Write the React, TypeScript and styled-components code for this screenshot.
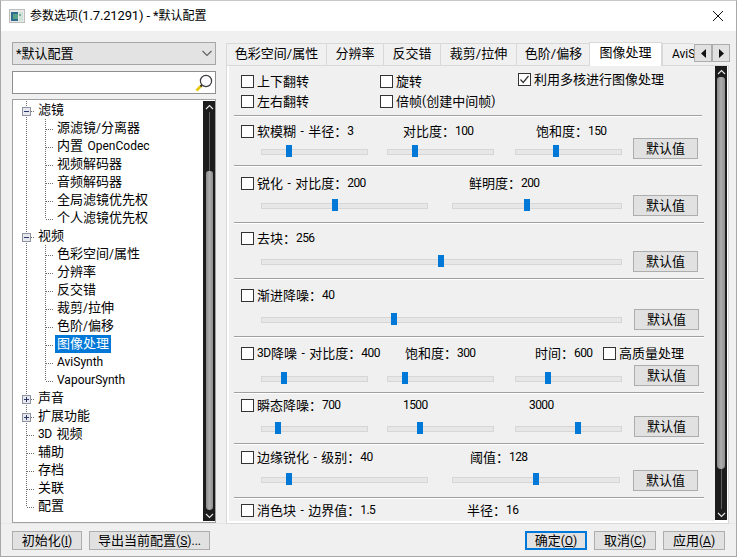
import React from "react";
import styled, { createGlobalStyle } from "styled-components";

const Global = createGlobalStyle`
  html, body { margin: 0; padding: 0; background: #f0f0f0; }
  * { box-sizing: border-box; }
  body { font-family: Roboto, "Noto Sans CJK SC", sans-serif; font-size: 13px; color: #000; }
`;

const Window = styled.div`
  width: 737px; height: 557px; display: flex; flex-direction: column;
  background: #f0f0f0; border: 1px solid #a8a8a8; border-top-color: #c8c8c8; overflow: hidden;
`;
const TitleBar = styled.header`
  height: 30px; background: #fff; display: flex; align-items: center; padding: 0 9px 1px 8px; flex: none;
`;
const TitleText = styled.span`
  margin-left: 5px; flex: 1; line-height: 16px; white-space: pre; font-size: 12px;
`;
const Main = styled.div`
  height: 492px; display: flex; flex: none;
`;
const Left = styled.div`
  width: 215px; padding: 11px 0 0 11px; display: flex; flex-direction: column; flex: none;
`;
const Combo = styled.div`
  height: 23px; background: #e3e3e3; border: 1px solid #a6a6a6; display: flex; align-items: center;
  justify-content: space-between; padding: 0 2px 0 3px; line-height: 16px;
`;
const Search = styled.div`
  height: 23px; margin-top: 6px; background: #fff; border: 1px solid #8f8f8f; display: flex;
  align-items: center; justify-content: flex-end; padding-right: 1px;
`;
const Tree = styled.div`
  margin-top: 5px; height: 424px; background: #fff; border: 1px solid #a0a0a0; display: flex;
  justify-content: space-between; padding: 1px 0 1px 0; flex: none;
`;
const TreeList = styled.div`
  display: flex; flex-direction: column; width: 189px;
`;
const TreeRow = styled.div`
  height: 18px; display: flex; align-items: stretch; flex: none; white-space: pre;
`;
const TreeLabel = styled.span<{ $selected?: boolean }>`
  padding: 0 2px; line-height: 17px; height: 18px; background: ${(p) => (p.$selected ? "#0078d7" : "transparent")};
  color: ${(p) => (p.$selected ? "#fff" : "#000")};
`;
const Bar = styled.div<{ $w: number }>`
  width: ${(p) => p.$w}px; background: #1c1c1c; display: flex; flex-direction: column; align-items: center; flex: none;
`;
const BarArrow = styled.div`
  height: 11px; display: flex; align-items: center; justify-content: center; flex: none;
`;
const BarLine = styled.div<{ $h: number }>`
  width: 1px; height: ${(p) => p.$h}px; background: #5f5f5f; flex: none;
`;
const BarThumb = styled.div<{ $w: number; $h: number }>`
  width: ${(p) => p.$w}px; height: ${(p) => p.$h}px; flex: none; border-radius: 4px 4px 5px 5px;
  background: linear-gradient(90deg, #8a8a8a, #adadad 50%, #8f8f8f);
`;
const Right = styled.div`
  position: relative; margin-left: 10px; width: 503px; padding-top: 11px; display: flex; flex-direction: column; flex: none;
`;
const TabStrip = styled.div`
  display: flex; align-items: flex-end; height: 24px; width: 468px; overflow: hidden; flex: none;
`;
const Tab = styled.div<{ $w: number; $active?: boolean }>`
  position: relative; z-index: ${(p) => (p.$active ? 1 : 0)}; width: ${(p) => p.$w}px; flex: none;
  height: ${(p) => (p.$active ? 24 : 22)}px; margin-bottom: ${(p) => (p.$active ? 0 : 1)}px;
  margin-left: ${(p) => (p.$active ? -1 : 0)}px;
  background: ${(p) => (p.$active ? "#fff" : "#f0f0f0")}; border: 1px solid #d9d9d9; border-width: 1px 0 0 1px;
  ${(p) => (p.$active ? "border-right-width: 1px;" : "")}
  text-align: center; line-height: ${(p) => (p.$active ? 20 : 19)}px; white-space: pre;
`;
const TabText = styled.span<{ $clip?: boolean }>`
  ${(p) => (p.$clip ? "display:block; text-align:left; padding-left: 9px;" : "")}
`;
const Spin = styled.div`
  position: absolute; left: 468px; top: 13px; display: flex;
`;
const SpinBtn = styled.div`
  width: 18px; height: 18px; background: #e1e1e1; border: 1px solid #adadad;
  display: flex; align-items: center; justify-content: center;
`;
const Page = styled.div`
  margin-top: -1px; height: 459px; background: #fff; border: 1px solid #d9d9d9; padding: 0 1px 3px 2px; display: flex; flex: none;
`;
const Content = styled.div`
  width: 486px; height: 455px; background: #f0f0f0; overflow: hidden; flex: none;
`;
const Divider = styled.div<{ $end: number }>`
  height: 2px; margin-left: 5px; width: ${(p) => p.$end}px; background: #a0a0a0; border-bottom: 1px solid #fff;
`;
const Section = styled.section<{ $h: number; $pt: number }>`
  height: ${(p) => p.$h}px; padding: ${(p) => p.$pt}px 0 0 12px;
`;
const OptionGrid = styled.div`
  display: grid; grid-template-columns: 139px 138px 200px; grid-auto-rows: 20px;
`;
const Header = styled.div`
  display: flex; height: 13px; align-items: center;
`;
const Cell = styled.div<{ $w?: number }>`
  ${(p) => (p.$w ? `width: ${p.$w}px; flex: none;` : "")}
  display: flex; align-items: center; white-space: pre; line-height: 13px; height: 13px;
`;
const OptionCell = styled(Cell)<{ $up?: number }>`
  margin-top: ${(p) => -(p.$up ?? 0)}px;
`;
const Box = styled.span`
  width: 13px; height: 13px; background: #fff; border: 1px solid #333; flex: none; margin-right: 3px;
  display: inline-flex; align-items: center; justify-content: center;
`;
const Controls = styled.div<{ $gap: number }>`
  display: flex; margin-top: ${(p) => p.$gap}px;
`;
const Sliders = styled.div<{ $top: number }>`
  width: 392px; padding: ${(p) => p.$top}px 0 0 20px; display: flex; align-items: flex-start; flex: none;
`;
const Slider = styled.div<{ $w: number; $ml: number }>`
  position: relative; width: ${(p) => p.$w}px; height: 12px; margin-left: ${(p) => p.$ml}px; flex: none;
  &::before {
    content: ""; display: block; margin-top: 4px; height: 4px; background: #e7e7e7; border: 1px solid #d6d6d6;
  }
`;
const Thumb = styled.div`
  position: absolute; top: 0; width: 6px; height: 12px; background: #0078d7;
`;
const Btn = styled.button<{ $w?: number; $default?: boolean; $ml?: number }>`
  font: inherit; color: #000; padding: 0; width: ${(p) => p.$w ?? 65}px; height: 21px; flex: none;
  margin-left: ${(p) => p.$ml ?? 0}px; background: #e1e1e1;
  border: ${(p) => (p.$default ? "2px solid #0078d7" : "1px solid #adadad")}; line-height: 16px; white-space: pre;
  text-align: center;
`;
const Footer = styled.footer`
  flex: 1; display: flex; padding: 7px 11px 0 11px; gap: 7px; border-top: 1px solid #e6e6e6;
`;
const FooterBtn = styled(Btn)`
  height: 19px; line-height: 15px;
`;
const Spacer = styled.div`
  flex: 1;
`;
const Latin = styled.span`
  font-size: 12px; word-spacing: 1.5px;
`;
const Digits = styled.span`
  font-size: 12px; letter-spacing: -0.6px;
`;
const TitleLatin = styled.span`
  font-size: 13px; letter-spacing: -0.15px;
`;

/* The reference's Latin and digits are smaller than its Han text, so runs of each get their own span. */
function mix(text: string): React.ReactNode {
  return text.split(/([0-9.]+|[\x20-\x2d\x2f\x3a-\x7e]+)/).filter(Boolean).map((run, i) => {
    if (/^[0-9.]+$/.test(run)) return <Digits key={i}>{run}</Digits>;
    if (/^[\x20-\x7e]+$/.test(run)) return <Latin key={i}>{run}</Latin>;
    return <React.Fragment key={i}>{run}</React.Fragment>;
  });
}

function Access({ before, letter, after = "" }: { before: string; letter: string; after?: string }) {
  return (
    <>
      {before}<Latin>(<u>{letter}</u>){after}</Latin>
    </>
  );
}

type Node = { t: string; lvl: 0 | 1; box?: "minus" | "plus"; last?: boolean; end?: boolean; sel?: boolean };
const nodes: Node[] = [
  { t: "滤镜", lvl: 0, box: "minus" },
  { t: "源滤镜/分离器", lvl: 1 }, { t: "内置 OpenCodec", lvl: 1 }, { t: "视频解码器", lvl: 1 },
  { t: "音频解码器", lvl: 1 }, { t: "全局滤镜优先权", lvl: 1 }, { t: "个人滤镜优先权", lvl: 1, last: true },
  { t: "视频", lvl: 0, box: "minus" },
  { t: "色彩空间/属性", lvl: 1 }, { t: "分辨率", lvl: 1 }, { t: "反交错", lvl: 1 }, { t: "裁剪/拉伸", lvl: 1 },
  { t: "色阶/偏移", lvl: 1 }, { t: "图像处理", lvl: 1, sel: true }, { t: "AviSynth", lvl: 1 },
  { t: "VapourSynth", lvl: 1, last: true },
  { t: "声音", lvl: 0, box: "plus" }, { t: "扩展功能", lvl: 0, box: "plus" }, { t: "3D 视频", lvl: 0 },
  { t: "辅助", lvl: 0 }, { t: "存档", lvl: 0 }, { t: "关联", lvl: 0 }, { t: "配置", lvl: 0, end: true },
];

const dots = { stroke: "#6f6f6f", strokeDasharray: "1 1", shapeRendering: "crispEdges" as const };

function Connector({ n }: { n: Node }) {
  const w = n.lvl === 0 ? 23 : 42;
  return (
    <svg width={w} height={18} style={{ flex: "none" }}>
      <line x1={13.5} y1={0} x2={13.5} y2={n.end ? 10 : 18} {...dots} />
      {n.lvl === 1 && <line x1={32.5} y1={0} x2={32.5} y2={n.last ? 10 : 18} {...dots} />}
      <line x1={n.lvl === 1 ? 33 : 14} y1={10.5} x2={w - 1} y2={10.5} {...dots} />
      {n.box && (
        <g shapeRendering="crispEdges">
          <rect x={9.5} y={6.5} width={8} height={8} fill="#e6e8ee" stroke="#8d93a3" />
          <line x1={11} y1={10.5} x2={16} y2={10.5} stroke="#2b3a6b" />
          {n.box === "plus" && <line x1={13.5} y1={8} x2={13.5} y2={13} stroke="#2b3a6b" />}
        </g>
      )}
    </svg>
  );
}

function Chevron({ up }: { up: boolean }) {
  return (
    <svg width={9} height={6}>
      <path d={up ? "M1 5L4.5 1.5L8 5" : "M1 1L4.5 4.5L8 1"} fill="none" stroke="#e8e8e8" strokeWidth={1.1} />
    </svg>
  );
}

function ScrollBar({ w, tw, before, thumb, after }: { w: number; tw: number; before: number; thumb: number; after: number }) {
  return (
    <Bar $w={w}>
      <BarArrow><Chevron up /></BarArrow>
      <BarLine $h={before} />
      <BarThumb $w={tw} $h={thumb} />
      <BarLine $h={after} />
      <BarArrow><Chevron up={false} /></BarArrow>
    </Bar>
  );
}

function Check({ checked, label }: { checked?: boolean; label: string }) {
  return (
    <>
      <Box>
        {checked && (
          <svg width={11} height={11}>
            <path d="M1.5 5.5L4.2 8.5L9.5 2" fill="none" stroke="#333" strokeWidth={1.2} />
          </svg>
        )}
      </Box>
      {mix(label)}
    </>
  );
}

type S = { w: number; ml: number; pos: number };
type Col = { w?: number; text: string; check?: boolean };
type Sec = { h: number; pt: number; gap: number; top: number; end: number; btnMl: number; cols: Col[]; sliders: S[] };

const sections: Sec[] = [
  {
    h: 48, pt: 8, gap: 0, top: 7, end: 468, btnMl: 0,
    cols: [{ w: 162, text: "软模糊 - 半径：3", check: true }, { w: 133, text: "对比度：100" }, { text: "饱和度：150" }],
    sliders: [{ w: 107, ml: 0, pos: 25 }, { w: 107, ml: 19, pos: 25 }, { w: 107, ml: 21, pos: 38 }],
  },
  {
    h: 55, pt: 10, gap: 5, top: 4, end: 468, btnMl: 0,
    cols: [{ w: 228, text: "锐化 - 对比度：200", check: true }, { text: "鲜明度：200" }],
    sliders: [{ w: 167, ml: 0, pos: 71 }, { w: 170, ml: 24, pos: 72 }],
  },
  {
    h: 54, pt: 8, gap: 6, top: 4, end: 470, btnMl: 0,
    cols: [{ text: "去块：256", check: true }],
    sliders: [{ w: 361, ml: 0, pos: 177 }],
  },
  {
    h: 56, pt: 9, gap: 7, top: 4, end: 470, btnMl: 1,
    cols: [{ text: "渐进降噪：40", check: true }],
    sliders: [{ w: 361, ml: 0, pos: 130 }],
  },
  {
    h: 54, pt: 9, gap: 5, top: 7, end: 470, btnMl: 1,
    cols: [
      { w: 164, text: "3D降噪 - 对比度：400", check: true }, { w: 130, text: "饱和度：300" },
      { w: 68, text: "时间：600" }, { text: "高质量处理", check: true },
    ],
    sliders: [{ w: 107, ml: 0, pos: 20 }, { w: 107, ml: 19, pos: 15 }, { w: 107, ml: 21, pos: 30 }],
  },
  {
    h: 49, pt: 5, gap: 4, top: 6, end: 470, btnMl: 1,
    cols: [{ w: 162, text: "瞬态降噪：700", check: true }, { w: 126, text: "1500" }, { text: "3000" }],
    sliders: [{ w: 107, ml: 0, pos: 14 }, { w: 107, ml: 19, pos: 30 }, { w: 107, ml: 21, pos: 60 }],
  },
  {
    h: 52, pt: 6, gap: 6, top: 3, end: 470, btnMl: 0,
    cols: [{ w: 229, text: "边缘锐化 - 级别：40", check: true }, { text: "阈值：128" }],
    sliders: [{ w: 167, ml: 0, pos: 25 }, { w: 168, ml: 24, pos: 81 }],
  },
];

const tabs: [string, number][] = [
  ["色彩空间/属性", 100], ["分辨率", 57], ["反交错", 57], ["裁剪/拉伸", 76], ["色阶/偏移", 74],
];

export default function App() {
  return (
    <>
      <Global />
      <Window>
        <TitleBar>
          <svg width={16} height={14} style={{ flex: "none" }}>
            <g shapeRendering="crispEdges">
              <rect x={0.5} y={0.5} width={15} height={13} fill="#e9e9e9" stroke="#bdbdbd" />
              <rect x={2} y={3} width={7} height={9} fill="#2f6d8c" />
              <rect x={4} y={5} width={5} height={5} fill="#58a08a" />
              <rect x={10} y={3} width={4} height={9} fill="#cfe3d8" />
              <rect x={10} y={5} width={2} height={2} fill="#7fb2a0" />
            </g>
          </svg>
          <TitleText>参数选项<TitleLatin>(1.7.21291) - *</TitleLatin>默认配置</TitleText>
          <svg width={12} height={12} style={{ flex: "none", marginRight: 3 }}>
            <path d="M1 1L11 11M11 1L1 11" stroke="#111" strokeWidth={1} />
          </svg>
        </TitleBar>
        <Main>
          <Left>
            <Combo>
              <span>*默认配置</span>
              <svg width={12} height={7}>
                <path d="M1.5 1L6 5.5L10.5 1" fill="none" stroke="#606060" strokeWidth={1.1} />
              </svg>
            </Combo>
            <Search>
              <svg width={20} height={20}>
                <circle cx={12} cy={8} r={5.6} fill="#fbfcff" stroke="#3b3b3b" strokeWidth={1.2} />
                <line x1={7.5} y1={12.5} x2={2.5} y2={17.5} stroke="#e8c800" strokeWidth={2.6} />
                <line x1={8} y1={12} x2={6.5} y2={13.5} stroke="#333" strokeWidth={2} />
              </svg>
            </Search>
            <Tree>
              <TreeList>
                {nodes.map((n) => (
                  <TreeRow key={n.t}>
                    <Connector n={n} />
                    <TreeLabel $selected={n.sel}>{mix(n.t)}</TreeLabel>
                  </TreeRow>
                ))}
              </TreeList>
              <ScrollBar w={12} tw={7} before={59} thumb={339} after={0} />
            </Tree>
          </Left>
          <Right>
            <TabStrip>
              {tabs.map(([t, w]) => (
                <Tab key={t} $w={w}><TabText>{t}</TabText></Tab>
              ))}
              <Tab $w={73} $active><TabText>图像处理</TabText></Tab>
              <Tab $w={60}><TabText $clip>{mix("AviSynth")}</TabText></Tab>
            </TabStrip>
            <Spin>
              <SpinBtn>
                <svg width={5} height={9}><path d="M5 0V9L0 4.5Z" fill="#111" /></svg>
              </SpinBtn>
              <SpinBtn>
                <svg width={5} height={9}><path d="M0 0V9L5 4.5Z" fill="#111" /></svg>
              </SpinBtn>
            </Spin>
            <Page>
              <Content>
                <Section $h={49} $pt={9}>
                  <OptionGrid>
                    <Cell><Check label="上下翻转" /></Cell>
                    <Cell><Check label="旋转" /></Cell>
                    <OptionCell $up={2}><Check checked label="利用多核进行图像处理" /></OptionCell>
                    <Cell><Check label="左右翻转" /></Cell>
                    <Cell><Check label="倍帧(创建中间帧)" /></Cell>
                  </OptionGrid>
                </Section>
                {sections.map((s, i) => (
                  <React.Fragment key={i}>
                    <Divider $end={s.end} />
                    <Section $h={s.h} $pt={s.pt}>
                      <Header>
                        {s.cols.map((c, j) => (
                          <Cell key={j} $w={c.w}>
                            {c.check ? <Check label={c.text} /> : mix(c.text)}
                          </Cell>
                        ))}
                      </Header>
                      <Controls $gap={s.gap}>
                        <Sliders $top={s.top}>
                          {s.sliders.map((sl, j) => (
                            <Slider key={j} $w={sl.w} $ml={sl.ml}>
                              <Thumb style={{ left: sl.pos }} />
                            </Slider>
                          ))}
                        </Sliders>
                        <Btn $ml={s.btnMl}>默认值</Btn>
                      </Controls>
                    </Section>
                  </React.Fragment>
                ))}
                <Divider $end={470} />
                <Section $h={30} $pt={5}>
                  <Header>
                    <Cell $w={226}><Check label="消色块 - 边界值：1.5" /></Cell>
                    <Cell>{mix("半径：16")}</Cell>
                  </Header>
                </Section>
              </Content>
              <ScrollBar w={12} tw={8} before={0} thumb={392} after={40} />
            </Page>
          </Right>
        </Main>
        <Footer>
          <FooterBtn $w={70}><Access before="初始化" letter="I" /></FooterBtn>
          <FooterBtn $w={121}><Access before="导出当前配置" letter="S" after="..." /></FooterBtn>
          <Spacer />
          <FooterBtn $w={62} $default><Access before="确定" letter="O" /></FooterBtn>
          <FooterBtn $w={62}><Access before="取消" letter="C" /></FooterBtn>
          <FooterBtn $w={62}><Access before="应用" letter="A" /></FooterBtn>
        </Footer>
      </Window>
    </>
  );
}
